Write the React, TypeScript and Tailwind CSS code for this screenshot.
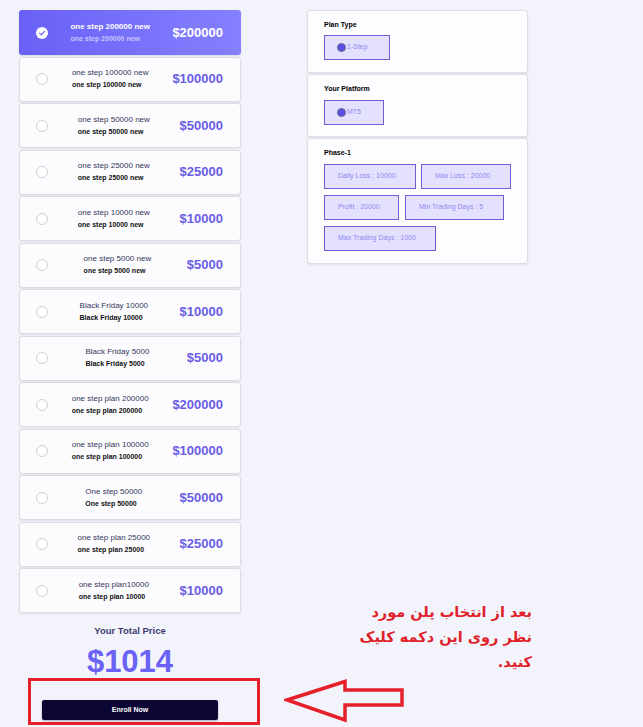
import React from 'react';

interface Plan {
  title: string;
  subtitle: string;
  price: string;
}

const plans: Plan[] = [
  { title: 'one step 200000 new', subtitle: 'one step 200000 new', price: '$200000' },
  { title: 'one step 100000 new', subtitle: 'one step 100000 new', price: '$100000' },
  { title: 'one step 50000 new', subtitle: 'one step 50000 new', price: '$50000' },
  { title: 'one step 25000 new', subtitle: 'one step 25000 new', price: '$25000' },
  { title: 'one step 10000 new', subtitle: 'one step 10000 new', price: '$10000' },
  { title: 'one step 5000 new', subtitle: 'one step 5000 new', price: '$5000' },
  { title: 'Black Friday 10000', subtitle: 'Black Friday 10000', price: '$10000' },
  { title: 'Black Friday 5000', subtitle: 'Black Friday 5000', price: '$5000' },
  { title: 'one step plan 200000', subtitle: 'one step plan 200000', price: '$200000' },
  { title: 'one step plan 100000', subtitle: 'one step plan 100000', price: '$100000' },
  { title: 'One step 50000', subtitle: 'One step 50000', price: '$50000' },
  { title: 'one step plan 25000', subtitle: 'one step plan 25000', price: '$25000' },
  { title: 'one step plan10000', subtitle: 'one step plan 10000', price: '$10000' },
];

const PlanCard: React.FC<{ plan: Plan; selected?: boolean }> = ({ plan, selected }) => {
  if (selected) {
    return (
      <div className="flex h-[45px] items-center rounded-[3px] bg-gradient-to-r from-[#6a60f6] to-[#8580ff] pl-[17px] pr-[18px] shadow-[0_1px_2px_rgba(0,0,0,0.12)]">
        <span className="flex h-[12px] w-[12px] items-center justify-center rounded-full bg-white">
          <svg width="8" height="8" viewBox="0 0 10 10">
            <path d="M2 5.2 L4.2 7.3 L8 3" fill="none" stroke="#6a60f6" strokeWidth="1.4" strokeLinecap="round" strokeLinejoin="round" />
          </svg>
        </span>
        <div className="flex flex-1 justify-center">
          <div className="flex flex-col">
            <span className="text-[8px] font-bold leading-[12px] text-white">{plan.title}</span>
            <span className="text-[7px] font-bold leading-[12px] text-[#c9c5ff]">{plan.subtitle}</span>
          </div>
        </div>
        <span className="text-[13px] font-bold text-white">{plan.price}</span>
      </div>
    );
  }
  return (
    <div className="flex h-[45px] items-center rounded-[3px] border border-[#dcdce5] bg-[#fcfcff] pl-[16px] pr-[17px] shadow-[0_1px_2px_rgba(0,0,0,0.08)]">
      <span className="h-[12px] w-[12px] rounded-full border border-[#cfcfd8] bg-white" />
      <div className="flex flex-1 justify-center">
        <div className="flex flex-col">
          <span className="text-[8px] leading-[12px] text-[#35355a]">{plan.title}</span>
          <span className="text-[7px] font-bold leading-[12px] text-[#111]">{plan.subtitle}</span>
        </div>
      </div>
      <span className="text-[13px] font-bold text-[#6a5ce4]">{plan.price}</span>
    </div>
  );
};

const Chip: React.FC<{ label: string; dot?: boolean; width: string }> = ({ label, dot, width }) => (
  <div
    className={`flex h-[25px] items-center border-[1.5px] border-[#6f5fd6] bg-[#e4e1ff] ${width} ${
      dot ? 'pl-[12px]' : 'pl-[13px]'
    }`}
  >
    {dot && (
      <span className="mr-[1px] h-[9px] w-[9px] rounded-full border border-[#6b6b80] bg-[#5b4fe8]" />
    )}
    <span className="text-[7px] text-[#9088ee]">{label}</span>
  </div>
);

const Panel: React.FC<{ title: string; children: React.ReactNode; className?: string }> = ({
  title,
  children,
  className,
}) => (
  <div
    className={`rounded-[3px] border border-[#dedee6] bg-[#fdfdff] pl-[16px] pt-[9px] shadow-[0_1px_2px_rgba(0,0,0,0.08)] ${className ?? ''}`}
  >
    <div className="text-[7px] font-bold leading-[10px] text-black">{title}</div>
    {children}
  </div>
);

export default function App() {
  return (
    <div
      className="relative min-h-[727px] w-[643px] overflow-hidden bg-[#f3f4fb]"
      style={{ fontFamily: '"Liberation Sans", Arial, sans-serif' }}
    >
      <div className="flex items-start pl-[19px] pt-[10px]">
        {/* plan list */}
        <div className="flex w-[222px] flex-col">
          <div className="flex flex-col gap-[1.5px]">
            {plans.map((p, i) => (
              <PlanCard key={i} plan={p} selected={i === 0} />
            ))}
          </div>

          <div className="mt-[11px] flex flex-col items-center">
            <span className="text-[9.5px] font-bold text-[#3c3c6e]">Your Total Price</span>
            <span className="mt-[6px] text-[31px] font-bold leading-[36px] text-[#6a62f4]">$1014</span>
            <button className="mt-[20px] h-[20px] w-[176px] rounded-[2px] bg-[#0b0633] text-[7px] font-bold text-white shadow-[0_1px_2px_rgba(0,0,0,0.3)]">
              Enroll Now
            </button>
          </div>
        </div>

        {/* plan details */}
        <div className="ml-[66px] flex w-[221px] flex-col gap-[1px]">
          <Panel title="Plan Type" className="h-[63px]">
            <div className="mt-[5px]">
              <Chip label="1-Step" dot width="w-[66px]" />
            </div>
          </Panel>
          <Panel title="Your Platform" className="h-[63px]">
            <div className="mt-[6px]">
              <Chip label="MT5" dot width="w-[60px]" />
            </div>
          </Panel>
          <Panel title="Phase-1" className="h-[126px]">
            <div className="mt-[6px] flex flex-col gap-[6px]">
              <div className="flex gap-[5px]">
                <Chip label="Daily Loss : 10000" width="w-[92px]" />
                <Chip label="Max Loss : 20000" width="w-[90px]" />
              </div>
              <div className="flex gap-[6px]">
                <Chip label="Profit : 20000" width="w-[75px]" />
                <Chip label="Min Trading Days : 5" width="w-[99px]" />
              </div>
              <div className="flex">
                <Chip label="Max Trading Days : 1000" width="w-[112px]" />
              </div>
            </div>
          </Panel>
        </div>
      </div>

      {/* annotation: red frame around the button */}
      <div className="absolute left-[28px] top-[678px] h-[47px] w-[232px] border-[3px] border-[#e5202a]" />

      {/* annotation: arrow */}
      <svg className="absolute left-[284px] top-[678px]" width="122" height="46" viewBox="0 0 122 46">
        <path
          d="M3 22 L61 3.5 L61 12 L118 12 L118 27 L61 27 L61 42 Z"
          fill="none"
          stroke="#e5202a"
          strokeWidth="3.5"
          strokeLinejoin="miter"
        />
      </svg>

      {/* annotation: note */}
      <div
        dir="rtl"
        className="absolute right-[111px] top-[600px] text-right text-[14.5px] font-bold leading-[25px] text-[#e01f2b]"
        style={{ fontFamily: '"DejaVu Sans", sans-serif' }}
      >
        <div>بعد از انتخاب پلن مورد</div>
        <div>نظر روی این دکمه کلیک</div>
        <div>کنید.</div>
      </div>
    </div>
  );
}
